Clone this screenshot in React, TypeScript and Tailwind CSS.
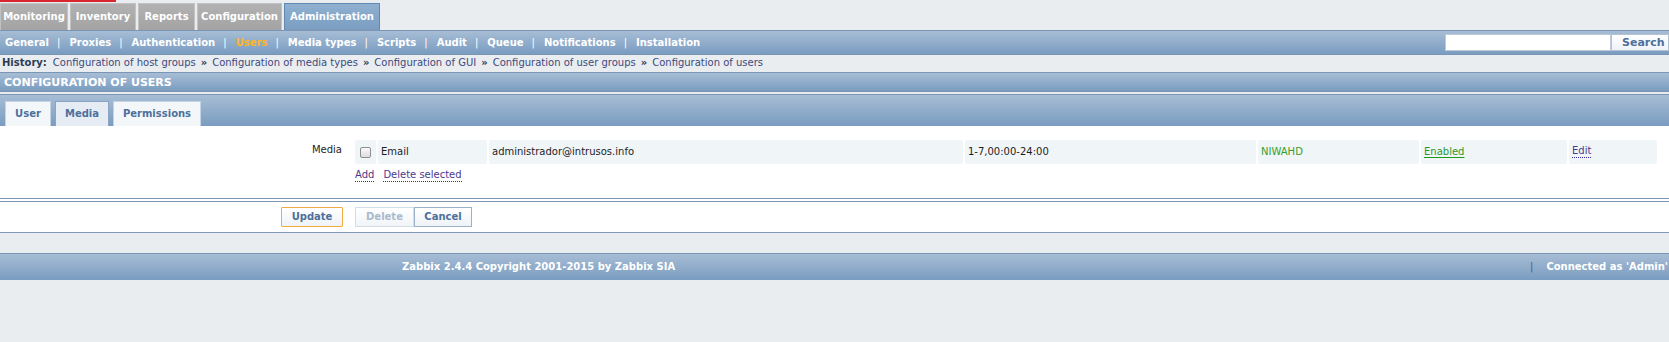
import React from "react";

const topTabs = [
  { label: "Monitoring", w: "w-[68px]" },
  { label: "Inventory", w: "w-[66px]" },
  { label: "Reports", w: "w-[57px]" },
  { label: "Configuration", w: "w-[85px]" },
];

const subItems = [
  "General",
  "Proxies",
  "Authentication",
  "Users",
  "Media types",
  "Scripts",
  "Audit",
  "Queue",
  "Notifications",
  "Installation",
];

const history = [
  "Configuration of host groups",
  "Configuration of media types",
  "Configuration of GUI",
  "Configuration of user groups",
  "Configuration of users",
];

function Cell({ className, children }: { className: string; children?: React.ReactNode }) {
  return (
    <div className={`h-[24px] rounded-[2px] bg-[#f0f5f8] flex items-center ${className}`}>{children}</div>
  );
}

export default function App() {
  return (
    <div className="min-h-[342px] w-[1669px] overflow-hidden bg-[#eaedf0] font-['DejaVu_Sans',sans-serif] text-[10px] leading-none">
      {/* red strip */}
      <div className="h-[3px]">
        <div className="h-[2px] w-[116px] bg-[#d8262c]" />
      </div>

      {/* top tabs */}
      <div className="flex h-[27px] gap-[2px] font-bold text-white">
        {topTabs.map((t) => (
          <div
            key={t.label}
            className={`${t.w} flex items-center justify-center bg-gradient-to-b from-[#b2b2b2] to-[#a3a3a3] border-t border-x border-[#c2c2c2]`}
          >
            {t.label}
          </div>
        ))}
        <div className="w-[96px] flex items-center justify-center bg-gradient-to-b from-[#8fb0d0] to-[#7a9dc1] border-t border-x border-[#5f88b2]">
          Administration
        </div>
      </div>

      {/* sub menu */}
      <div className="flex h-[25px] items-center justify-between border-y border-[#7b96b4] bg-gradient-to-b from-[#a7bdd5] to-[#7a9cc0] font-bold text-white">
        <div className="flex items-center pl-[5px]">
          {subItems.map((s, i) => (
            <React.Fragment key={s}>
              {i > 0 && <span className="ml-[8px] mr-[9px] font-normal text-white">|</span>}
              <span className={s === "Users" ? "text-[#ffb521]" : ""}>{s}</span>
            </React.Fragment>
          ))}
        </div>
        <div className="flex h-[17px] items-stretch">
          <div className="w-[166px] bg-white border border-[#bfcbd9]" />
          <div className="w-[58px] flex items-center pl-[10px] bg-gradient-to-b from-[#ffffff] to-[#eef2f7] border border-[#b3c2d3] text-[#4d6f9c] text-[11px]">
            Search
          </div>
        </div>
      </div>

      {/* history */}
      <div className="flex h-[16px] items-center pl-[2px] text-[#3b4a7e]">
        <span className="mr-[6px] font-bold text-[#2d3c55]">History:</span>
        {history.map((h, i) => (
          <React.Fragment key={h}>
            {i > 0 && <span className="mx-[5px] text-[#2d3c55] font-bold">»</span>}
            <span>{h}</span>
          </React.Fragment>
        ))}
      </div>

      {/* header */}
      <div className="mt-[1px] flex h-[20px] items-center border-y border-[#7b96b4] bg-gradient-to-b from-[#a7bdd5] to-[#7a9cc0] pl-[4px] text-[11px] font-bold text-white">
        CONFIGURATION OF USERS
      </div>

      {/* tab bar */}
      <div className="mt-[2px] flex h-[32px] items-end gap-[4px] border-t border-[#7b96b4] bg-gradient-to-b from-[#a7bdd5] to-[#7a9cc0] pl-[5px] font-bold text-[#4d6f9c]">
        <div className="flex h-[25px] w-[46px] items-center justify-center border-x border-t border-[#c5d3e2] bg-[#f4f7fa]">User</div>
        <div className="flex h-[25px] w-[54px] items-center justify-center border-x border-t border-[#8aa5c3] bg-[#e6ecf3]">Media</div>
        <div className="flex h-[25px] w-[88px] items-center justify-center border-x border-t border-[#c5d3e2] bg-[#f4f7fa]">Permissions</div>
      </div>

      {/* content */}
      <div className="flex h-[72px] bg-white pt-[14px]">
        <div className="w-[342px] pt-[5px] text-right text-[#1e1e1e]">Media</div>
        <div className="ml-[13px] flex flex-col">
          <div className="flex gap-[2px] text-[#1e1e1e]">
            <Cell className="w-[21px] justify-center">
              <div className="h-[11px] w-[11px] rounded-[2px] border border-[#8e8e8e] bg-gradient-to-b from-[#fafafa] to-[#dcdcdc]" />
            </Cell>
            <Cell className="w-[109px] pl-[3px]">Email</Cell>
            <Cell className="w-[474px] pl-[3px]">administrador@intrusos.info</Cell>
            <Cell className="w-[291px] pl-[3px]">1-7,00:00-24:00</Cell>
            <Cell className="w-[161px] pl-[3px] text-[#33a02c]">NIWAHD</Cell>
            <Cell className="w-[146px] pl-[3px]">
              <span className="text-[#2a9a2a] underline decoration-[#1c9a1c] underline-offset-2">Enabled</span>
            </Cell>
            <Cell className="w-[88px] pl-[3px]">
              <span className="text-[#4b3a8c] border-b border-dotted border-[#3a2a9a] pb-[1px]">Edit</span>
            </Cell>
          </div>
          <div className="mt-[6px] flex gap-[9px] text-[#4b3a8c]">
            <span className="border-b border-dotted border-[#3a2a9a] pb-[1px]">Add</span>
            <span className="border-b border-dotted border-[#3a2a9a] pb-[1px]">Delete selected</span>
          </div>
        </div>
      </div>

      {/* divider */}
      <div className="h-[4px] border-y border-[#7f9ab8] bg-white" />

      {/* buttons */}
      <div className="flex h-[31px] items-center border-b border-[#7f9ab8] bg-white pl-[281px] font-bold">
        <div className="flex h-[20px] w-[62px] items-center justify-center rounded-[1px] border border-[#f2aa42] bg-gradient-to-b from-[#ffffff] to-[#eef2f7] text-[#4d6f9c]">Update</div>
        <div className="ml-[12px] flex h-[20px] w-[59px] items-center justify-center border border-[#d3dde7] bg-gradient-to-b from-[#ffffff] to-[#f1f4f8] text-[#a9bace]">Delete</div>
        <div className="flex h-[20px] w-[58px] items-center justify-center border border-[#9db1c8] bg-gradient-to-b from-[#ffffff] to-[#eef2f7] text-[#4d6f9c]">Cancel</div>
      </div>

      {/* footer */}
      <div className="mt-[20px] flex h-[27px] items-center border-t border-[#7b96b4] bg-gradient-to-b from-[#a7bdd5] to-[#7a9cc0] font-bold text-white">
        <div className="pl-[402px]">Zabbix 2.4.4 Copyright 2001-2015 by Zabbix SIA</div>
        <div className="ml-auto flex w-[139px] shrink-0 items-center whitespace-nowrap">
          <span className="font-normal text-[#4a5a7a]">|</span>
          <span className="ml-[13px]">Connected as 'Admin'</span>
        </div>
      </div>
    </div>
  );
}
